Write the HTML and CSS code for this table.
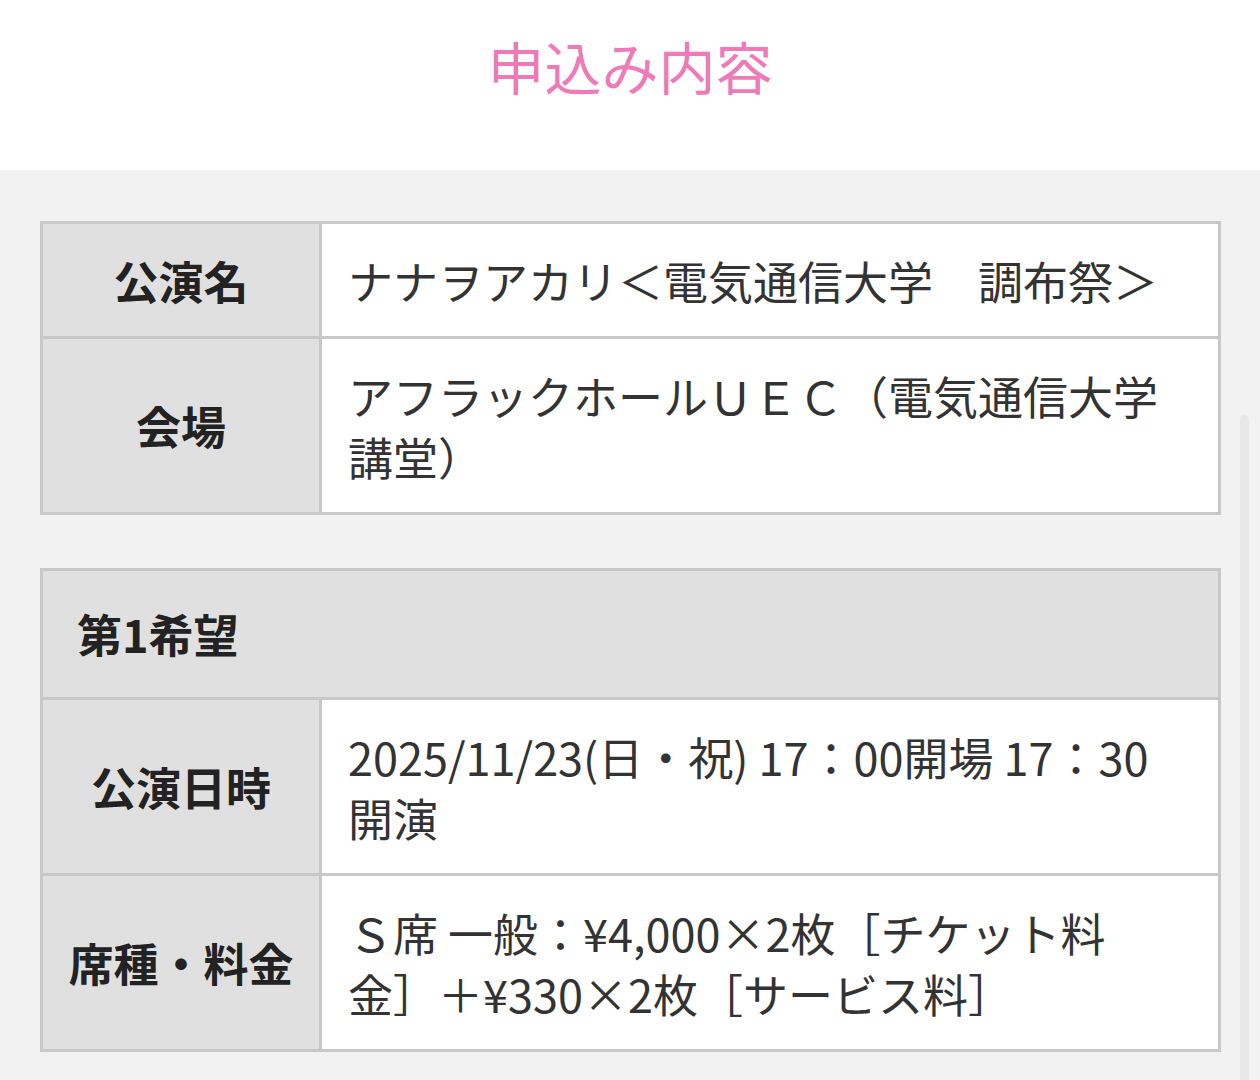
FILE: index.html
```html
<!DOCTYPE html>
<html lang="ja">
<head>
<meta charset="utf-8">
<title>申込み内容</title>
<link rel="stylesheet" href="styles.css">
</head>
<body>
<header class="page-header">
  <h1 class="page-title">申込み内容</h1>
</header>
<main class="content">
  <table class="info-table">
    <colgroup><col class="label-col"><col class="value-col"></colgroup>
    <tr>
      <th class="label">公演名</th>
      <td class="value">ナナヲアカリ＜電気通信大学　調布祭＞</td>
    </tr>
    <tr>
      <th class="label">会場</th>
      <td class="value">アフラックホールＵＥＣ（電気通信大学講堂）</td>
    </tr>
  </table>
  <table class="info-table">
    <colgroup><col class="label-col"><col class="value-col"></colgroup>
    <tr>
      <th class="group-head" colspan="2">第1希望</th>
    </tr>
    <tr>
      <th class="label">公演日時</th>
      <td class="value">2025/11/23(日・祝) 17：00開場 17：30開演</td>
    </tr>
    <tr>
      <th class="label">席種・料金</th>
      <td class="value">Ｓ席 一般：¥4,000×2枚［チケット料金］＋¥330×2枚［サービス料］</td>
    </tr>
  </table>
</main>
<div class="scroll-indicator"></div>
</body>
</html>
```
FILE: styles.css
```css
html, body {
  margin: 0;
  padding: 0;
}
body {
  font-family: "Noto Sans CJK JP", "Noto Sans", sans-serif;
  background: #f2f2f2;
  color: #333;
  min-height: 1080px;
}
.page-header {
  background: #ffffff;
  height: 170px;
  box-sizing: border-box;
  padding-top: 25px;
}
.page-title {
  margin: 0;
  text-align: center;
  font-size: 57px;
  font-weight: 400;
  line-height: 80px;
  color: #ef7ab7;
  letter-spacing: 0;
}
.content {
  padding: 51px 39px 40px 40px;
  display: flex;
  flex-direction: column;
  gap: 53px;
}
.info-table {
  width: 100%;
  border-collapse: collapse;
  table-layout: fixed;
  border: 3px solid #c8c8c8;
}
.label-col {
  width: 279px;
}
.info-table th,
.info-table td {
  border: 3px solid #c8c8c8;
  font-size: 45px;
  line-height: 61px;
  text-spacing-trim: space-all;
}
.label {
  background: #e0e0e0;
  color: #222;
  font-weight: 700;
  text-align: center;
  padding: 25px 0;
}
.value {
  background: #ffffff;
  color: #333;
  font-weight: 400;
  text-align: left;
  padding: 26px 38px 25px 26px;
  word-break: break-all;
}
.group-head {
  background: #e0e0e0;
  color: #222;
  font-weight: 700;
  text-align: left;
  padding: 32px 34px 33px 34px;
}
.scroll-indicator {
  position: absolute;
  top: 415px;
  left: 1240px;
  width: 9px;
  height: 700px;
  border-radius: 5px;
  background: #e8e8e8;
}
```
